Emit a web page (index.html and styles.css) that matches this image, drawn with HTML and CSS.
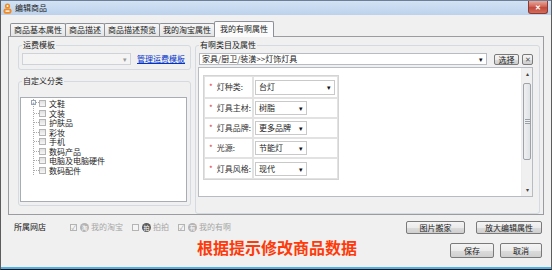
FILE: index.html
```html
<!DOCTYPE html>
<html lang="zh-CN">
<head>
    <meta charset="UTF-8">
    <title>编辑商品</title>
    <link rel="stylesheet" href="styles.css">
</head>
<body>
    <div class="window">
        <div class="titlebar">
            <svg class="app-icon" width="9" height="11" viewBox="0 0 9 11">
                <circle cx="4.5" cy="3" r="2.6" fill="#f08a24"/>
                <circle cx="4.5" cy="3" r="1" fill="#fff"/>
                <rect x="0.5" y="5.4" width="8" height="5.4" rx="2.2" fill="#f08a24"/>
                <rect x="2.5" y="7.4" width="4" height="1.4" fill="#fff"/>
            </svg>
            <span class="title">编辑商品</span>
            <div class="close">✕</div>
        </div>

        <div class="main">
            <div class="tabs">
                <div class="tab">商品基本属性</div>
                <div class="tab">商品描述</div>
                <div class="tab">商品描述预览</div>
                <div class="tab">我的淘宝属性</div>
                <div class="tab active">我的有啊属性</div>
            </div>

            <div class="tab-panel">
                <div class="left-col">
                    <fieldset class="group ship">
                        <legend>运费模板</legend>
                        <div class="row">
                            <div class="combo disabled"><span class="arrow">▾</span></div>
                            <a class="link" href="#">管理运费模板</a>
                        </div>
                    </fieldset>

                    <fieldset class="group cats">
                        <legend>自定义分类</legend>
                        <div class="tree">
                            <ul class="tree-list">
                                <li><span class="branch"><span class="expander">+</span></span><span class="cb"></span>文鞋</li>
                                <li><span class="branch"></span><span class="cb"></span>文装</li>
                                <li><span class="branch"></span><span class="cb"></span>护肤品</li>
                                <li><span class="branch"></span><span class="cb"></span>彩妆</li>
                                <li><span class="branch"></span><span class="cb"></span>手机</li>
                                <li><span class="branch"></span><span class="cb"></span>数码产品</li>
                                <li><span class="branch"></span><span class="cb"></span>电脑及电脑硬件</li>
                                <li class="last"><span class="branch"></span><span class="cb"></span>数码配件</li>
                            </ul>
                        </div>
                    </fieldset>
                </div>

                <fieldset class="group props">
                    <legend>有啊类目及属性</legend>
                    <div class="row">
                        <div class="combo category">家具/厨卫/装潢&gt;&gt;灯饰灯具<span class="arrow dark">▾</span></div>
                        <button class="btn pick">选择</button>
                        <button class="btn clear">✕</button>
                    </div>
                    <div class="prop-panel">
                        <div class="prop-area">
                            <table class="prop-table">
                                <tr class="first">
                                    <td class="label"><span class="req">*</span>灯种类:</td>
                                    <td><div class="select wide">台灯<span class="arrow dark">▾</span></div></td>
                                </tr>
                                <tr>
                                    <td class="label"><span class="req">*</span>灯具主材:</td>
                                    <td><div class="select">树脂<span class="arrow dark">▾</span></div></td>
                                </tr>
                                <tr>
                                    <td class="label"><span class="req">*</span>灯具品牌:</td>
                                    <td><div class="select">更多品牌<span class="arrow dark">▾</span></div></td>
                                </tr>
                                <tr>
                                    <td class="label"><span class="req">*</span>光源:</td>
                                    <td><div class="select">节能灯<span class="arrow dark">▾</span></div></td>
                                </tr>
                                <tr class="last">
                                    <td class="label"><span class="req">*</span>灯具风格:</td>
                                    <td><div class="select">现代<span class="arrow dark">▾</span></div></td>
                                </tr>
                            </table>
                        </div>
                        <div class="scrollbar">
                            <div class="sb-btn">▴</div>
                            <div class="sb-track"><div class="thumb"><span class="grip"></span></div></div>
                            <div class="sb-btn">▾</div>
                        </div>
                    </div>
                </fieldset>
            </div>

            <div class="footer">
                <div class="footer-row">
                    <span class="shop-label">所属网店</span>
                    <div class="shops">
                        <label class="shop"><span class="cb checked">✓</span><span class="shop-icon grey">淘</span>我的淘宝</label>
                        <label class="shop"><span class="cb"></span><span class="shop-icon dark">拍</span>拍拍</label>
                        <label class="shop"><span class="cb checked">✓</span><span class="shop-icon grey">有</span>我的有啊</label>
                    </div>
                    <div class="actions">
                        <button class="btn move">图片搬家</button>
                        <button class="btn zoom">放大编辑属性</button>
                    </div>
                </div>
                <div class="footer-row second">
                    <span class="hint">根据提示修改商品数据</span>
                    <div class="actions">
                        <button class="btn save">保存</button>
                        <button class="btn cancel">取消</button>
                    </div>
                </div>
            </div>
        </div>
    </div>
</body>
</html>
```

FILE: styles.css
```css
* { margin: 0; padding: 0; box-sizing: border-box; }
body {
    background: #f0f0f0;
    color: #222;
    font: 8px/10px "Noto Sans CJK SC", "Noto Sans", sans-serif;
}

.window {
    width: 552px;
    height: 270px;
    display: flex;
    flex-direction: column;
    background: #f0f0f0;
    border-left: 1px solid #5c5c5c;
    border-right: 1px solid #5c5c5c;
    border-bottom: 1px solid #111;
    box-shadow: inset 0 -2px 0 #4fb0e8;
}

/* title bar */
.titlebar {
    height: 15px;
    display: flex;
    align-items: center;
    background: linear-gradient(#d3e2f4, #bcd2ec);
    border-top: 1px solid #6c7f96;
}
.app-icon { margin-left: 2px; }
.title { margin-left: 3px; color: #1a1a1a; }
.close {
    margin-left: auto;
    margin-right: 3px;
    align-self: flex-start;
    width: 20px;
    height: 13px;
    border: 1px solid #8a3b33;
    border-top: none;
    border-radius: 0 0 3px 3px;
    background: linear-gradient(#e9a89b, #d0675a 45%, #c24a3c 55%, #d46d5c);
    color: #fff;
    font-size: 7px;
    line-height: 12px;
    text-align: center;
    font-weight: bold;
}

.main {
    flex: 1;
    display: flex;
    flex-direction: column;
    padding: 6px 7px 0;
}

/* tabs */
.tabs {
    display: flex;
    align-items: flex-end;
    height: 15px;
    padding-left: 2px;
}
.tab {
    height: 13px;
    padding: 0 3px;
    margin-left: -1px;
    border: 1px solid #8d9096;
    border-bottom: none;
    border-radius: 2px 2px 0 0;
    background: linear-gradient(#f6f6f6, #e4e4e4);
    line-height: 11px;
    white-space: nowrap;
}
.tab:first-child { margin-left: 0; }
.tab.active {
    position: relative;
    z-index: 1;
    height: 16px;
    margin-bottom: -1px;
    padding: 0 5px;
    background: #fbfbfb;
    line-height: 13px;
}

.tab-panel {
    height: 179px;
    display: flex;
    gap: 4px;
    padding: 3px 3px 0 9px;
    border: 1px solid #9a9ca0;
    background: #f0f0f0;
}

/* group boxes */
.group {
    border: 1px solid #d3dbe0;
    border-radius: 3px;
    min-width: 0;
}
.group legend {
    line-height: 10px;
    padding: 0 1px;
    color: #222;
}
.row { display: flex; align-items: center; }

.left-col { width: 173px; display: flex; flex-direction: column; }
.ship { padding: 3px 3px 4px; }
.cats { margin-top: 6px; padding: 11px 3px 3px 1px; }
.cats legend { margin-left: 2px; }

.combo {
    height: 12px;
    display: flex;
    align-items: center;
    padding-left: 2px;
    border: 1px solid #b8bcc2;
    background: #fff;
    white-space: nowrap;
}
.combo.disabled { width: 109px; background: #f4f4f4; border-color: #cfd2d6; }
.arrow {
    margin-left: auto;
    width: 10px;
    text-align: center;
    color: #9a9a9a;
    font-size: 7px;
}
.arrow.dark { color: #111; }
.link { margin-left: 6px; color: #0033cc; text-decoration: underline; }

/* tree */
.tree {
    width: 167px;
    height: 105px;
    border: 1px solid #a8adb4;
    background: #fff;
    padding: 1px 0 0 12px;
}
.tree-list {
    list-style: none;
    margin-left: 0;
    border-left: 1px dotted #a9a9a9;
    width: max-content;
}
.tree-list li {
    height: 9.5px;
    line-height: 9.5px;
    display: flex;
    align-items: center;
    white-space: nowrap;
}
.branch {
    width: 5px;
    border-top: 1px dotted #a9a9a9;
    display: flex;
    justify-content: flex-start;
}
.expander {
    width: 5px;
    height: 5px;
    margin: -3px 0 0 -3px;
    border: 1px solid #9aa5b5;
    background: #fff;
    font-size: 5px;
    line-height: 3px;
    text-align: center;
    color: #3b5b8c;
}
.cb {
    width: 7px;
    height: 7px;
    margin-right: 3px;
    border: 1px solid #b4b4b4;
    background: linear-gradient(#e0e0e0, #f6f6f6);
    font-size: 6px;
    line-height: 5px;
    text-align: center;
    color: #9a9a9a;
    flex: none;
}

/* category and properties */
.props { flex: 1; padding: 3px 6px 10px 3px; }
.category { width: 288px; }
.btn {
    font: inherit;
    color: #222;
    border: 1px solid #7a7a7a;
    border-radius: 2px;
    background: linear-gradient(#f4f4f4, #ebebeb 50%, #dcdcdc 51%, #cfcfcf);
    line-height: 9px;
}
.pick { margin-left: 7px; width: 25px; height: 11px; }
.clear { margin-left: 3px; width: 11px; height: 11px; font-size: 7px; color: #555; }

.prop-panel {
    margin: 2px 0 0 -1px;
    height: 130px;
    display: flex;
    border: 1px solid #b7bcc3;
    background: #fff;
}
.prop-area { flex: 1; padding: 7px 0 0 4px; }
.prop-table {
    border: 1px solid #d4d4d4;
    border-spacing: 0;
    width: 136px;
}
.prop-table td {
    border: 1px solid #e2e2e2;
    height: 20px;
    padding: 0 1px;
    white-space: nowrap;
}
.prop-table tr.first td { height: 22px; }
.prop-table tr.last td { height: 21px; }
.prop-table .label { width: 49px; padding-left: 4px; color: #333; }
.req { color: #e03b3b; margin-right: 4px; }
.select {
    width: 52px;
    height: 14px;
    display: flex;
    align-items: center;
    padding-left: 3px;
    border: 1px solid #c9c9c9;
    background: #fff;
}
.select.wide { width: 80px; height: 15px; }

.scrollbar {
    width: 11px;
    display: flex;
    flex-direction: column;
    background: #f0f0f0;
    border-left: 1px solid #ececec;
}
.sb-btn {
    height: 12px;
    font-size: 6px;
    line-height: 12px;
    text-align: center;
    color: #444;
}
.sb-track { flex: 1; padding: 3px 1px 0; }
.thumb {
    height: 77px;
    display: flex;
    align-items: center;
    justify-content: center;
    border: 1px solid #9ea3aa;
    border-radius: 2px;
    background: linear-gradient(90deg, #eef0f2, #dfe2e6);
}
.grip {
    width: 5px;
    height: 5px;
    border-top: 1px solid #9aa0a8;
    border-bottom: 1px solid #9aa0a8;
    background: linear-gradient(#f0f0f0 40%, #9aa0a8 40%, #9aa0a8 60%, #f0f0f0 60%);
}

/* footer */
.footer { display: flex; flex-direction: column; padding: 5px 2px 0 6px; }
.footer-row { display: flex; align-items: center; height: 14px; }
.shop-label { color: #111; }
.shops { display: flex; gap: 9px; margin-left: 24px; }
.shop { display: flex; align-items: center; color: #a6a6a6; white-space: nowrap; }
.shop .cb { margin-right: 3px; background: #f4f4f4; }
.shop-icon {
    width: 9px;
    height: 9px;
    margin-right: 2px;
    border-radius: 50%;
    color: #fff;
    font-size: 6px;
    line-height: 9px;
    text-align: center;
}
.shop-icon.grey { background: #b4b4b4; }
.shop-icon.dark { background: #5a5a5a; }
.actions { margin-left: auto; display: flex; align-items: flex-end; }
.move { width: 59px; height: 13px; }
.zoom { width: 66px; height: 13px; margin-left: 11px; }

.footer-row.second { height: 22px; margin-top: 2px; }
.hint {
    margin-left: 183px;
    color: #ff3a0a;
    font-size: 16px;
    line-height: 20px;
    font-weight: bold;
}
.second .actions { align-self: flex-end; }
.save { width: 44px; height: 15px; }
.cancel { width: 42px; height: 15px; margin-left: 6px; }
```
